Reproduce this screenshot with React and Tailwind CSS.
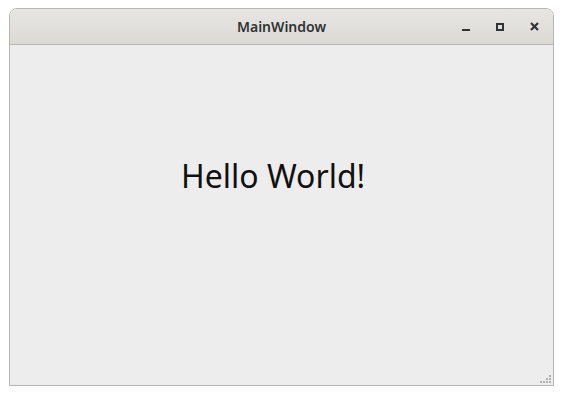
export default function App() {
  return (
    <div className="w-[563px] h-[395px] bg-white relative">
      <div className="absolute left-[9px] top-[8px] w-[545px] h-[378px] flex flex-col rounded-t-[8px] border border-[#b8b6b3] overflow-hidden">
        <div className="h-[36px] shrink-0 relative flex items-center justify-center bg-gradient-to-b from-[#e8e6e3] to-[#dcd9d5] border-b border-[#b8b6b3]">
          <span className="text-[14px] font-semibold text-[#2e3436]" style={{ fontFamily: '"Noto Sans", sans-serif' }}>MainWindow</span>
          <div className="absolute right-[2px] top-0 h-full flex items-center">
            <div className="w-[34px] h-full flex items-center justify-center">
              <div className="w-[8px] h-[2px] bg-[#2e3436] mt-[7px]" />
            </div>
            <div className="w-[34px] h-full flex items-center justify-center">
              <div className="w-[8px] h-[8px] border-2 border-[#2e3436]" />
            </div>
            <div className="w-[34px] h-full flex items-center justify-center">
              <svg width="9" height="9" viewBox="0 0 9 9">
                <path d="M1 1L8 8M8 1L1 8" stroke="#2e3436" strokeWidth="2.2" />
              </svg>
            </div>
          </div>
        </div>
        <div className="flex-1 relative bg-[#ededed]">
          <div
            className="absolute left-[171px] top-[115px] text-[32px] leading-none text-[#111]"
            style={{ fontFamily: '"Noto Sans", sans-serif' }}
          >
            Hello World!
          </div>
          <div className="absolute right-[2px] bottom-[2px] grid grid-cols-4 gap-[1px]">
            {[0,0,0,1, 0,0,1,1, 1,1,1,1].map((v, i) => (
              <div key={i} className={v ? "w-[2px] h-[2px] bg-[#b0b0b0]" : "w-[2px] h-[2px]"} />
            ))}
          </div>
        </div>
      </div>
    </div>
  );
}
